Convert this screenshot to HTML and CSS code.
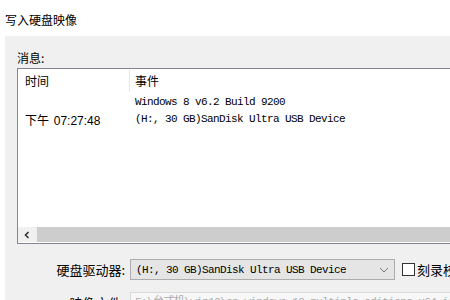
FILE: index.html
```html
<!DOCTYPE html>
<html lang="zh">
<head>
  <meta charset="UTF-8">
  <title>写入硬盘映像</title>
  <link rel="stylesheet" href="styles.css">
</head>
<body>
  <div class="title">写入硬盘映像</div>
  <div class="panel">
    <div class="caption">消息:</div>
    <div class="list">
      <div class="list-head">
        <div class="col-time">时间</div>
        <div class="col-event">事件</div>
      </div>
      <div class="list-body">
        <div class="row">
          <div class="col-time"></div>
          <div class="col-event mono">Windows 8 v6.2 Build 9200</div>
        </div>
        <div class="row">
          <div class="col-time">下午 <span class="clock">07:27:48</span></div>
          <div class="col-event mono">(H:, 30 GB)SanDisk Ultra USB Device</div>
        </div>
      </div>
      <div class="hscroll">
        <div class="arrow">
          <svg width="8" height="8" viewBox="0 0 8 8"><polyline points="5.5,1 2.5,4 5.5,7" fill="none" stroke="#333" stroke-width="1.6"/></svg>
        </div>
        <div class="thumb"></div>
      </div>
    </div>

    <div class="form">
      <div class="field">
        <label class="field-label">硬盘驱动器:</label>
        <div class="select mono">
          <span>(H:, 30 GB)SanDisk Ultra USB Device</span>
          <svg class="chev" width="10" height="6" viewBox="0 0 10 6"><polyline points="1,1 5,5 9,1" fill="none" stroke="#777" stroke-width="1"/></svg>
        </div>
        <div class="check"><span class="box"></span>刻录校验</div>
      </div>
      <div class="field">
        <label class="field-label">映像文件:</label>
        <div class="input mono">F:\台式机\win10\cn_windows_10_multiple_editions_x64.iso</div>
      </div>
    </div>
  </div>
</body>
</html>
```
FILE: styles.css
```css
html, body { margin: 0; height: 300px; overflow: hidden; }
body { background: #fff; font-family: "Noto Sans CJK SC", "Liberation Sans", sans-serif; font-size: 12px; color: #000; }

.title { height: 36px; padding-left: 5px; font-size: 12px; line-height: 40px; }

.panel { margin-left: 5px; width: 520px; height: 280px; background: #f0f0f0; padding: 13px 0 0 12px; box-sizing: border-box; }
.caption { height: 19px; line-height: 18px; font-size: 12px; }

.list { width: 520px; height: 176px; border: 1px solid #828790; background: #fff; box-sizing: border-box; display: flex; flex-direction: column; }
.list-head { display: flex; height: 24px; line-height: 24px; font-size: 12px; }
.list-head .col-time { border-right: 1px solid #e5e5e5; margin: 1px 0; line-height: 22px; }
.col-time { width: 104px; padding-left: 7px; flex-shrink: 0; }
.col-event { padding-left: 5px; }
.list-body { flex: 1; padding-top: 1px; }
.row { display: flex; height: 17px; line-height: 17px; }
.row .col-time { width: 105px; font-size: 12px; }
.clock { font-family: "Liberation Sans", sans-serif; font-size: 12px; margin-left: 2px; }

.mono { font-family: "Liberation Mono", "Noto Sans CJK SC", monospace; font-size: 11px; letter-spacing: -0.6px; }

.hscroll { display: flex; height: 15px; background: #f0f0f0; margin-bottom: 1px; }
.arrow { width: 19px; display: flex; align-items: center; justify-content: center; padding-right: 2px; box-sizing: border-box; }
.thumb { flex: 1; background: #cdcdcd; }

.form { padding-top: 15px; }
.field { display: flex; align-items: center; height: 21px; margin-bottom: 12px; }
.field-label { width: 108px; text-align: right; padding-right: 5px; font-size: 13px; flex-shrink: 0; }
.select { width: 265px; height: 21px; box-sizing: border-box; border: 1px solid #adadad; background: #e5e5e5; display: flex; align-items: center; justify-content: space-between; padding: 0 3px 0 5px; }
.chev { margin-right: 2px; }
.check { display: flex; align-items: center; margin-left: 7px; font-size: 13px; white-space: nowrap; }
.box { width: 11px; height: 11px; border: 1px solid #333; background: #fff; margin-right: 2px; }
.input { width: 330px; height: 21px; box-sizing: border-box; border: 1px solid #d9d9d9; background: #f7f7f7; color: #aaa; line-height: 19px; padding-left: 4px; white-space: nowrap; overflow: hidden; }
```
